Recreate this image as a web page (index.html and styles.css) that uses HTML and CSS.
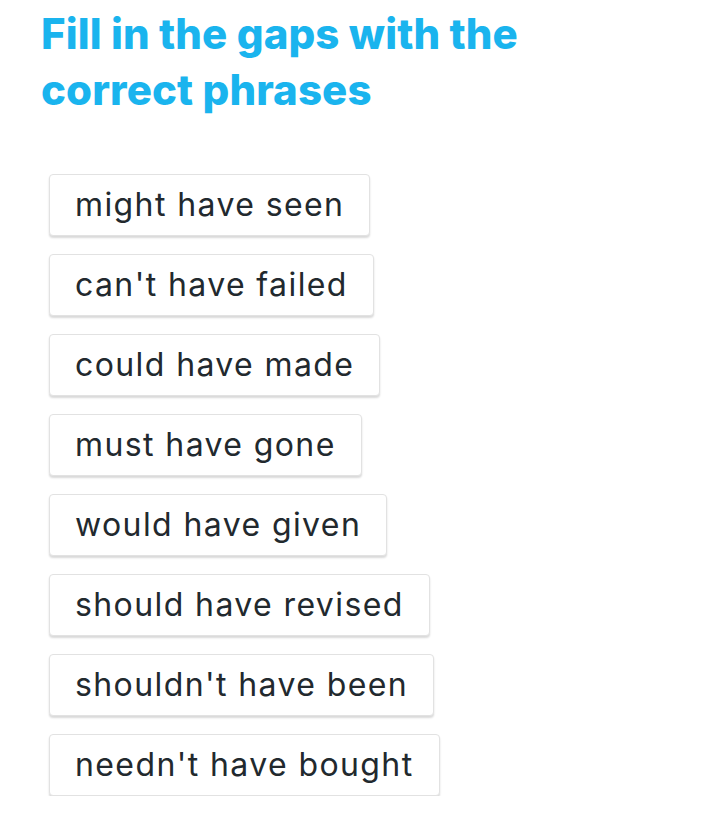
FILE: index.html
```html
<!DOCTYPE html>
<html lang="en">
<head>
    <meta charset="UTF-8">
    <meta name="viewport" content="width=device-width, initial-scale=1.0">
    <title>Fill in the gaps</title>
    <link rel="stylesheet" href="styles.css">
</head>
<body>
    <div class="container">
        <h1>Fill in the gaps with the correct phrases</h1>
        <div class="options">
            <div class="option">might have seen</div>
            <div class="option">can't have failed</div>
            <div class="option">could have made</div>
            <div class="option">must have gone</div>
            <div class="option">would have given</div>
            <div class="option">should have revised</div>
            <div class="option">shouldn't have been</div>
            <div class="option">needn't have bought</div>
        </div>
    </div>
</body>
</html>
```

FILE: styles.css
```css
body {
    margin: 0;
    background-color: #ffffff;
    font-family: Inter, "Noto Sans", sans-serif;
}
.container {
    padding: 6px 40px 0 41px;
}
h1 {
    margin: 0;
    width: 540px;
    font-size: 42px;
    line-height: 56px;
    font-weight: 800;
    letter-spacing: 0.1px;
    color: #1ab4ee;
}
.options {
    display: flex;
    flex-direction: column;
    align-items: flex-start;
    gap: 18px;
    margin-top: 56px;
    margin-left: 8px;
}
.option {
    height: 60px;
    line-height: 60px;
    padding: 0 25px;
    border: 1px solid #e2e2e2;
    border-radius: 4px;
    box-shadow: 0 2px 2px rgba(0,0,0,0.15);
    font-size: 32px;
    letter-spacing: 1.4px;
    color: #22292e;
    background-color: white;
}
```
